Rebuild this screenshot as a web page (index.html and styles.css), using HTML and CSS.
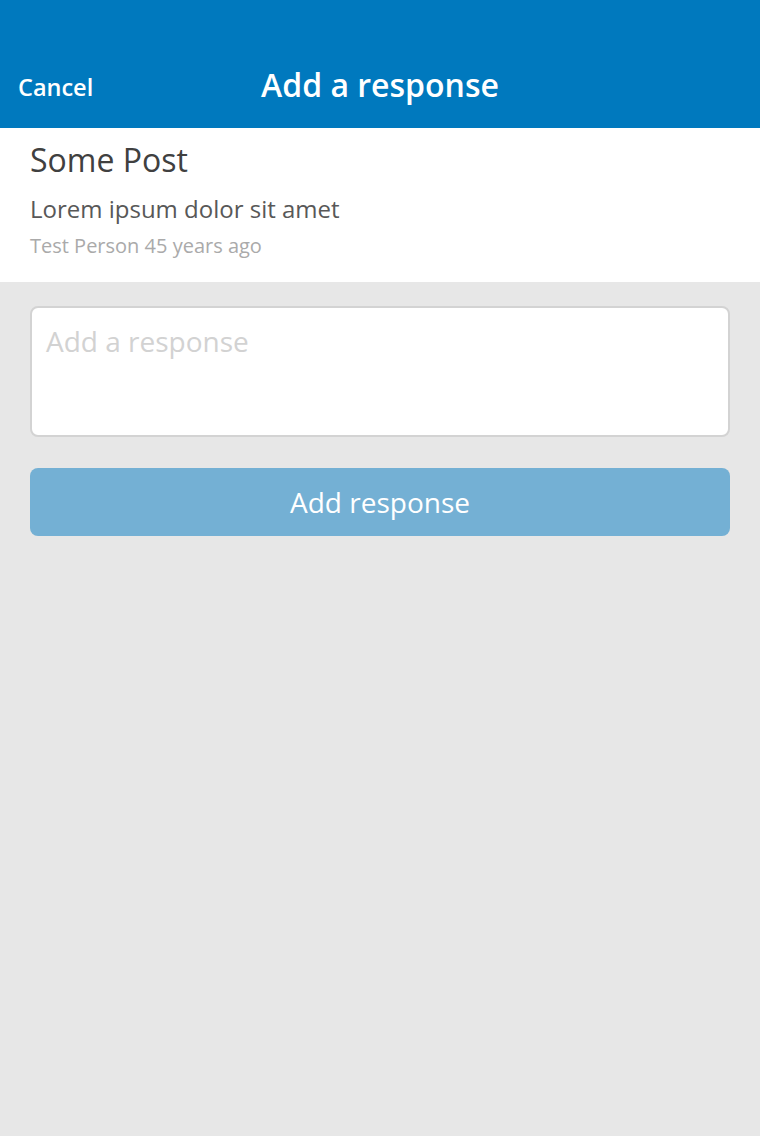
FILE: index.html
```html
<!DOCTYPE html>
<html>
<head>
<meta charset="utf-8">
<link rel="stylesheet" href="styles.css">
</head>
<body>
<header class="topbar">
  <span class="cancel">Cancel</span>
  <h1 class="title">Add a response</h1>
</header>
<section class="post">
  <h2 class="post-title">Some Post</h2>
  <p class="post-body">Lorem ipsum dolor sit amet</p>
  <p class="post-meta">Test Person 45 years ago</p>
</section>
<main class="form">
  <textarea class="response" placeholder="Add a response"></textarea>
  <button class="submit">Add response</button>
</main>
</body>
</html>
```
FILE: styles.css
```css
html, body {
  margin: 0;
  padding: 0;
  height: 100%;
}
body {
  background: #e7e7e7;
  font-family: "Open Sans", "Noto Sans", sans-serif;
}
.topbar {
  position: relative;
  height: 128px;
  background: #0079be;
  color: #fff;
  display: flex;
  align-items: flex-end;
  justify-content: center;
  box-sizing: border-box;
  padding-bottom: 23px;
}
.cancel {
  position: absolute;
  left: 18px;
  bottom: 25px;
  font-size: 23.5px;
  font-weight: 600;
  line-height: 32px;
}
.title {
  margin: 0;
  font-size: 32px;
  font-weight: 600;
  line-height: 40px;
}
.post {
  background: #fff;
  padding: 10px 30px 0;
  height: 154px;
  box-sizing: border-box;
}
.post-title {
  margin: 0;
  font-size: 32px;
  font-weight: 400;
  color: #404040;
  line-height: 44px;
}
.post-body {
  margin: 10px 0 0;
  font-size: 24px;
  color: #585858;
  line-height: 34px;
}
.post-meta {
  margin: 6px 0 0;
  font-size: 20px;
  color: #aaa;
  line-height: 28px;
}
.form {
  padding: 24px 30px;
  display: flex;
  flex-direction: column;
  gap: 31px;
}
.response {
  height: 131px;
  box-sizing: border-box;
  border: 2px solid #d3d3d3;
  border-radius: 8px;
  background: #fff;
  padding: 14px 14px;
  font-family: "Open Sans", "Noto Sans", sans-serif;
  font-size: 28px;
  line-height: 38px;
  resize: none;
  outline: none;
}
.response::placeholder {
  color: #d2d2d2;
}
.submit {
  height: 68px;
  border: none;
  border-radius: 8px;
  background: #74b0d4;
  color: #fff;
  font-family: "Open Sans", "Noto Sans", sans-serif;
  font-size: 28px;
  padding: 0;
}
```
